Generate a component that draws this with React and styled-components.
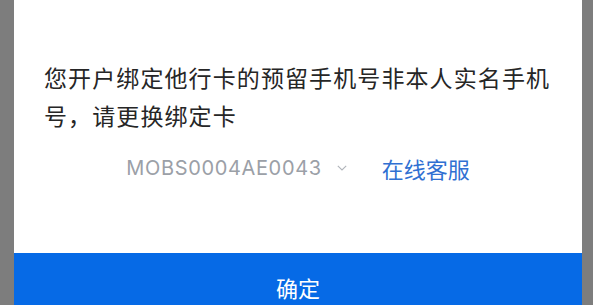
import React from 'react'
import styled, { createGlobalStyle } from 'styled-components'

const GlobalStyle = createGlobalStyle`
  html, body {
    margin: 0;
    padding: 0;
    background: #7d7d7d;
    overflow: hidden;
  }
  body {
    font-family: "Noto Sans CJK SC", "Noto Sans", sans-serif;
  }
`

const Backdrop = styled.div`
  width: 593px;
  height: 305px;
  padding: 0 11px 0 14px;
  box-sizing: border-box;
  background: #7d7d7d;
`

const Dialog = styled.div`
  background: #fff;
  height: 100%;
  display: flex;
  flex-direction: column;
`

const Body = styled.div`
  flex: 1;
  padding: 58px 30px 0;
  display: flex;
  flex-direction: column;
`

const Message = styled.p`
  margin: 0;
  font-size: 23px;
  letter-spacing: 1.1px;
  line-height: 38px;
  color: #262626;
`

const InfoRow = styled.div`
  margin-top: 18px;
  display: flex;
  align-items: center;
  justify-content: center;
  gap: 35px;
`

const CodeSelect = styled.div`
  display: flex;
  align-items: center;
  gap: 15px;
  color: #9ba0a7;
  font-family: Inter, "Noto Sans", sans-serif;
  font-size: 20px;
  letter-spacing: 0.65px;
`

const ServiceLink = styled.a`
  color: #3070d2;
  font-size: 22px;
  text-decoration: none;
`

const ConfirmButton = styled.button`
  height: 52px;
  border: 0;
  background: #066ae6;
  color: #fff;
  font-family: inherit;
  font-size: 22px;
  line-height: 24px;
  padding: 22px 0 0;
  display: flex;
  justify-content: center;
  align-items: flex-start;
  flex-shrink: 0;
`

const Chevron = () => (
  <svg width="10" height="6" viewBox="0 0 10 6" fill="none">
    <path d="M0.8 0.8l4.2 4.2L9.2 0.8" stroke="#b0b4ba" strokeWidth="1.1" />
  </svg>
)

const App = () => (
  <Backdrop>
    <GlobalStyle />
    <Dialog>
      <Body>
        <Message>您开户绑定他行卡的预留手机号非本人实名手机号，请更换绑定卡</Message>
        <InfoRow>
          <CodeSelect>
            MOBS0004AE0043
            <Chevron />
          </CodeSelect>
          <ServiceLink>在线客服</ServiceLink>
        </InfoRow>
      </Body>
      <ConfirmButton>确定</ConfirmButton>
    </Dialog>
  </Backdrop>
)

export default App
